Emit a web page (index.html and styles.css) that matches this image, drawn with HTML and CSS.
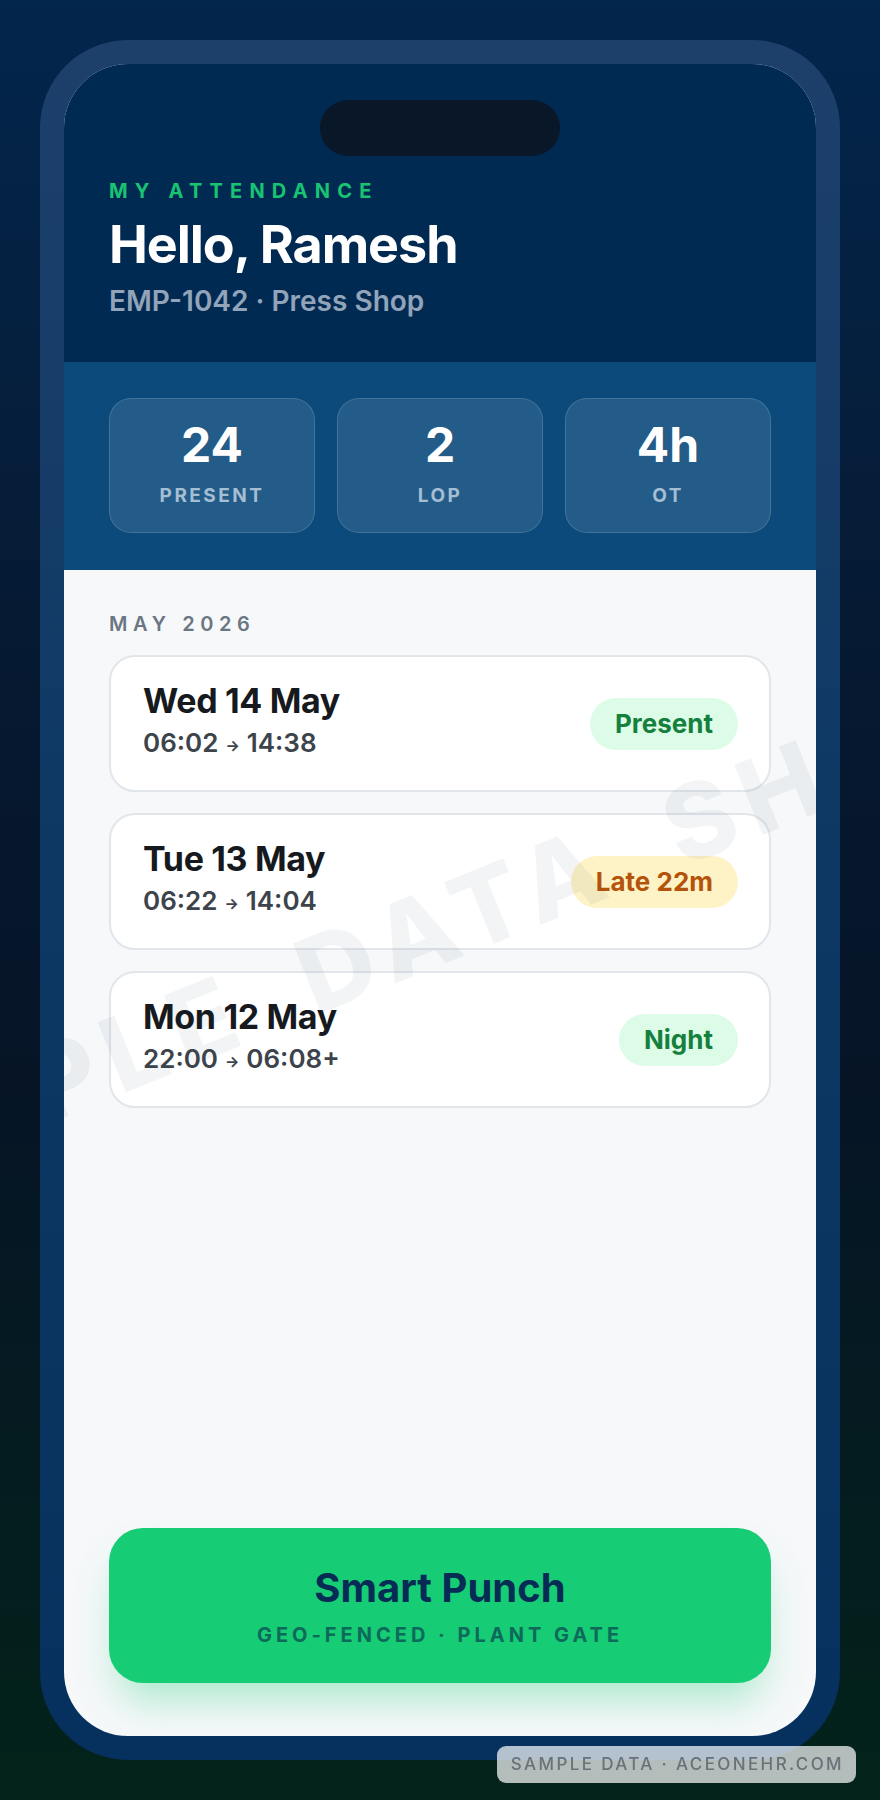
FILE: index.html
```html
<!DOCTYPE html>
<html lang="en">
<head>
  <meta charset="UTF-8" />
  <meta name="viewport" content="width=device-width, initial-scale=1.0"/>
  <title>AceOne HR - My Attendance</title>
  <link rel="stylesheet" href="styles.css">
</head>
<body>
  <div class="phone">
    <div class="screen">
      <header class="top">
        <div class="island"></div>
        <p class="eyebrow">MY ATTENDANCE</p>
        <h1>Hello, Ramesh</h1>
        <p class="emp">EMP-1042 · Press Shop</p>
      </header>

      <section class="stats">
        <div class="stat"><strong>24</strong><span>PRESENT</span></div>
        <div class="stat"><strong>2</strong><span>LOP</span></div>
        <div class="stat"><strong>4h</strong><span>OT</span></div>
      </section>

      <main class="list">
        <h2 class="month">MAY 2026</h2>

        <div class="day">
          <div class="day-info">
            <div class="date">Wed 14 May</div>
            <div class="times">06:02<span class="arrow">→</span>14:38</div>
          </div>
          <span class="badge ok">Present</span>
        </div>

        <div class="day">
          <div class="day-info">
            <div class="date">Tue 13 May</div>
            <div class="times">06:22<span class="arrow">→</span>14:04</div>
          </div>
          <span class="badge late">Late 22m</span>
        </div>

        <div class="day">
          <div class="day-info">
            <div class="date">Mon 12 May</div>
            <div class="times">22:00<span class="arrow">→</span>06:08+</div>
          </div>
          <span class="badge ok">Night</span>
        </div>

        <button class="punch">
          <span class="punch-title">Smart Punch</span>
          <span class="punch-sub">GEO-FENCED · PLANT GATE</span>
        </button>
      </main>

      <div class="watermark">SAMPLE DATA SHOWCASE</div>
    </div>
  </div>

  <div class="sample-tag">SAMPLE DATA · ACEONEHR.COM</div>
</body>
</html>
```

FILE: styles.css
```css
* {
  margin: 0;
  padding: 0;
  box-sizing: border-box;
  font-family: Inter, 'Noto Sans', 'Liberation Sans', sans-serif;
}

body {
  height: 1800px;
  background: linear-gradient(180deg, #03264d 0%, #061a33 35%, #061426 60%, #03231a 100%);
  display: flex;
  justify-content: center;
  align-items: center;
}

.phone {
  width: 800px;
  height: 1720px;
  padding: 24px;
  border-radius: 88px;
  background: linear-gradient(180deg, #1d406b 0%, #0d3864 50%, #06305d 100%);
}

.screen {
  position: relative;
  height: 100%;
  border-radius: 64px;
  overflow: hidden;
  background-color: #f6f8fa;
  display: flex;
  flex-direction: column;
}

/* header */
.top {
  background-color: #012a53;
  padding: 36px 45px 45px;
}

.island {
  width: 240px;
  height: 56px;
  margin: 0 auto 23px;
  border-radius: 28px;
  background-color: #0a1729;
}

.eyebrow {
  color: #18c472;
  font-size: 20px;
  line-height: 24px;
  font-weight: 700;
  letter-spacing: 0.36em;
}

.top h1 {
  color: white;
  font-size: 52px;
  line-height: 60px;
  font-weight: 700;
  letter-spacing: -0.02em;
  margin-top: 12px;
}

.emp {
  color: #91a4b9;
  font-size: 28px;
  line-height: 32px;
  font-weight: 600;
  margin-top: 10px;
}

/* summary tiles */
.stats {
  background-color: #0b4a7b;
  padding: 36px 45px 37px;
  display: grid;
  grid-template-columns: repeat(3, 1fr);
  gap: 22px;
}

.stat {
  height: 135px;
  padding-top: 18px;
  border: 1px solid rgba(255, 255, 255, 0.14);
  border-radius: 22px;
  background-color: rgba(255, 255, 255, 0.1);
  display: flex;
  flex-direction: column;
  align-items: center;
  gap: 11px;
}

.stat strong {
  color: white;
  font-size: 48px;
  line-height: 56px;
  font-weight: 700;
}

.stat span {
  color: #a5bed3;
  font-size: 19px;
  line-height: 24px;
  font-weight: 700;
  letter-spacing: 0.13em;
}

/* day list */
.list {
  flex: 1;
  padding: 42px 45px 53px;
  display: flex;
  flex-direction: column;
}

.month {
  color: #6b7683;
  font-size: 20px;
  line-height: 24px;
  font-weight: 600;
  letter-spacing: 0.28em;
  margin-bottom: 19px;
}

.day {
  height: 137px;
  margin-bottom: 21px;
  padding: 0 31px 0 32px;
  background-color: white;
  border: 2px solid #e2e6ea;
  border-radius: 26px;
  display: flex;
  align-items: center;
  justify-content: space-between;
}

.day-info {
  display: flex;
  flex-direction: column;
  gap: 6px;
  margin-top: -4px;
}

.date {
  color: #16191d;
  font-size: 34px;
  line-height: 40px;
  font-weight: 700;
  letter-spacing: -0.01em;
}

.times {
  color: #3d434b;
  font-size: 26px;
  line-height: 32px;
  font-weight: 600;
}

.arrow {
  font-size: 15px;
  font-weight: 700;
  margin: 0 7px;
  vertical-align: 1px;
}

.badge {
  height: 52px;
  padding: 0 25px;
  border-radius: 26px;
  font-size: 26px;
  line-height: 52px;
  font-weight: 700;
}

.badge.ok {
  background-color: #dcfce7;
  color: #15803d;
}

.badge.late {
  background-color: #fef3c7;
  color: #b45309;
}

.punch {
  margin-top: auto;
  height: 155px;
  border: none;
  border-radius: 34px;
  background-color: #16cc74;
  box-shadow: 0 26px 40px -10px rgba(22, 204, 116, 0.35);
  display: flex;
  flex-direction: column;
  align-items: center;
  justify-content: center;
  gap: 11px;
  cursor: pointer;
}

.punch-title {
  color: #062b55;
  font-size: 40px;
  line-height: 48px;
  font-weight: 700;
}

.punch-sub {
  color: #0d6a5b;
  font-size: 20px;
  line-height: 24px;
  font-weight: 700;
  letter-spacing: 0.2em;
}

/* diagonal stamp over the list */
.watermark {
  position: absolute;
  left: 486px;
  top: 816px;
  transform: translate(-50%, -50%) rotate(-22deg);
  white-space: nowrap;
  color: rgba(30, 60, 90, 0.06);
  font-size: 104px;
  line-height: 1;
  font-weight: 800;
  letter-spacing: 0.12em;
  word-spacing: 28px;
  pointer-events: none;
}

.sample-tag {
  position: fixed;
  right: 24px;
  bottom: 17px;
  padding: 0 12px 0 14px;
  height: 37px;
  line-height: 37px;
  border-radius: 9px;
  background-color: rgba(255, 255, 255, 0.7);
  color: #6b7178;
  font-size: 17px;
  font-weight: 500;
  letter-spacing: 0.14em;
}
```
